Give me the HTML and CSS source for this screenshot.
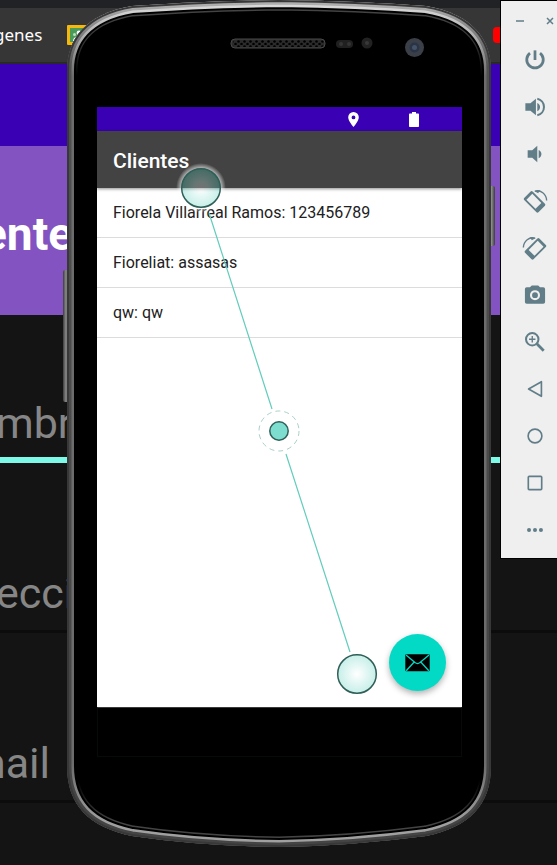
FILE: index.html
```html
<!DOCTYPE html>
<html lang="es">
<head>
<meta charset="utf-8">
<meta name="viewport" content="width=device-width, initial-scale=1">
<title>Clientes</title>
<link rel="stylesheet" href="styles.css">
</head>
<body>
<div class="desktop">
  <div class="tabstrip"></div>
  <nav class="bookmarks">
    <a class="bookmark" href="#">genes</a>
    <svg class="classroom" viewBox="0 0 24 20" aria-hidden="true">
      <rect width="24" height="20" rx="1" fill="#f4b90f"/><rect x="3" y="3" width="18" height="14" fill="#4b9b58"/>
      <circle cx="12" cy="8" r="2.4" fill="#fff"/><path d="M6 16c0-3 3-5 6-5s6 2 6 5z" fill="#fff"/><circle cx="7.5" cy="9.5" r="1.5" fill="#b9dfbd"/>
    </svg>
    <span class="video-mark"></span>
  </nav>
  <div class="page-status"></div>
  <header class="page-title"><span>ente</span><span class="page-action">K</span></header>
  <form class="page-form">
    <div class="field active"><label for="f1">mbr</label><input id="f1" type="text"></div>
    <div class="field"><label for="f2">ecci</label><input id="f2" type="text"></div>
    <div class="field cut"><label for="f3">mail</label><input id="f3" type="text"></div>
  </form>
</div>

<main class="phone">
  <svg class="frame" viewBox="0 0 432 848" aria-hidden="true">
    <defs>
      <linearGradient id="metal" x1="0" y1="0" x2="0" y2="848" gradientUnits="userSpaceOnUse">
        <stop offset="0" stop-color="#b4b4b4"/><stop offset=".03" stop-color="#8c8c8c"/><stop offset=".08" stop-color="#505050"/><stop offset="1" stop-color="#444"/>
      </linearGradient>
      <linearGradient id="shine" x1="0" y1="0" x2="0" y2="848" gradientUnits="userSpaceOnUse">
        <stop offset="0" stop-color="#e0e0e0"/><stop offset=".04" stop-color="#b4b4b4"/><stop offset=".09" stop-color="#6c6c6c"/><stop offset=".9" stop-color="#6c6c6c"/><stop offset=".97" stop-color="#a0a0a0"/>
      </linearGradient>
      <linearGradient id="bezel" x1="0" y1="0" x2="0" y2="848" gradientUnits="userSpaceOnUse">
        <stop offset="0" stop-color="#4a4a4a"/><stop offset=".05" stop-color="#333"/><stop offset=".09" stop-color="#000"/><stop offset=".92" stop-color="#000"/><stop offset=".97" stop-color="#444"/>
      </linearGradient>
      <linearGradient id="key" x1="0" y1="0" x2="1" y2="0">
        <stop offset="0" stop-color="#3c3c3c"/><stop offset=".5" stop-color="#8a8a8a"/><stop offset="1" stop-color="#3c3c3c"/>
      </linearGradient>
      <path id="body" d="M4 70C4 40 22 14 69 6Q137 1 216 0Q295 1 363 6C410 14 428 40 428 70V766C428 805 406 827 363 836Q286 846 216 847Q137 846 69 836C26 827 4 805 4 766Z"/>
      <clipPath id="edge"><use href="#body"/></clipPath>
      <pattern id="mesh" width="6" height="5" patternUnits="userSpaceOnUse" x="168" y="40"><circle cx="1.500" cy="1.500" r="1.300" fill="#000"/><circle cx="4.500" cy="4" r="1.300" fill="#000"/></pattern>
    </defs>
    <rect x="0" y="270" width="6" height="132" rx="2" fill="url(#key)"/>
    <rect x="425" y="186" width="7" height="60" rx="2" fill="url(#key)"/>
    <g clip-path="url(#edge)" fill="none">
      <use href="#body" fill="#000"/>
      <use href="#body" stroke="url(#bezel)" stroke-width="21"/>
      <use href="#body" stroke="#000" stroke-width="18"/>
      <use href="#body" stroke="url(#shine)" stroke-width="14"/>
      <use href="#body" stroke="url(#metal)" stroke-width="9"/>
      <use href="#body" stroke="#383838" stroke-width="4"/>
    </g>
    <rect x="168" y="39" width="94" height="9" rx="4" fill="#2b2b2b" stroke="#484848"/>
    <rect x="170" y="40" width="91" height="7" rx="3" fill="url(#mesh)"/>
    <rect x="273" y="40" width="17" height="8" rx="4" fill="#202020"/>
    <circle cx="278" cy="44" r="2" fill="#343434"/><circle cx="286" cy="44" r="2" fill="#343434"/>
    <circle cx="304" cy="43" r="5.500" fill="#222"/><circle cx="304" cy="43" r="2" fill="#383838"/>
    <circle cx="351.500" cy="47.500" r="9.500" fill="#3b4048"/><circle cx="351.500" cy="47.500" r="5" fill="#2b3444"/><circle cx="351.500" cy="47.500" r="2.500" fill="#43536b"/>
  </svg>
  <section class="screen">
    <div class="statusbar">
      <svg class="pin" viewBox="0 0 11 15" aria-label="Ubicación"><path fill="#fff" fill-rule="evenodd" d="M5.500 0A5.300 5.300 0 0 0 .2 5.300C.2 9.200 5.500 15 5.500 15s5.300-5.800 5.300-9.700A5.300 5.300 0 0 0 5.500 0zm0 3.500a1.900 1.900 0 1 1 0 3.800 1.900 1.900 0 0 1 0-3.800z"/></svg>
      <svg class="battery" viewBox="0 0 10 15" aria-label="Batería"><path fill="#fff" d="M3 0h4v1.500h2.200q.8 0 .8.800v11.900q0 .8-.8.800H.8q-.8 0-.8-.8V2.300q0-.8.8-.8H3z"/></svg>
    </div>
    <header class="appbar"><h1>Clientes</h1></header>
    <ul class="clients">
      <li>Fiorela Villarreal Ramos: 123456789</li>
      <li>Fioreliat: assasas</li>
      <li>qw: qw</li>
    </ul>
    <button class="fab" type="button" aria-label="Enviar correo">
      <svg viewBox="0 0 25 18"><rect x=".3" y=".3" width="24.400" height="17" rx="1" fill="#000"/><path d="M1 1l9 7.600q2.500 2 5 0L24 1M1.200 16.700L9 8.300M23.800 16.700L16 8.300" fill="none" stroke="#03dac5" stroke-width="1.300"/></svg>
    </button>
  </section>
  <div class="navbar"></div>
  <svg class="gesture" viewBox="0 0 432 848" aria-hidden="true">
    <defs>
      <radialGradient id="touch"><stop offset="0" stop-color="#fff" stop-opacity=".25"/><stop offset=".35" stop-color="#b9ece4" stop-opacity=".3"/><stop offset="1" stop-color="#45c9b5" stop-opacity=".3"/></radialGradient>
      <radialGradient id="halo"><stop offset=".76" stop-color="#fff" stop-opacity=".7"/><stop offset="1" stop-color="#fff" stop-opacity="0"/></radialGradient>
      <mask id="ring"><rect width="432" height="848" fill="#fff"/><circle cx="138" cy="188" r="19.500" fill="#000"/></mask>
    </defs>
    <circle cx="138" cy="188" r="25" fill="url(#halo)" mask="url(#ring)"/>
    <path d="M146 213L209 409M223 454L287 652" stroke="#63cdbb" stroke-width="1.200"/>
    <g stroke="#2f5f58" stroke-width="1.500">
      <circle cx="138" cy="188" r="19.300" fill="url(#touch)"/>
      <circle cx="294" cy="674" r="19.300" fill="url(#touch)"/>
      <circle cx="216" cy="431" r="9.200" fill="#7dddcf"/>
    </g>
    <circle cx="216" cy="431" r="20" fill="none" stroke="#a9d0c9" stroke-dasharray="5 4"/>
  </svg>
</main>

<aside class="toolbar">
  <div class="window-actions">
    <button type="button" aria-label="Minimizar"><svg viewBox="0 0 8 8"><path d="M0 4h8"/></svg></button>
    <button type="button" aria-label="Cerrar"><svg viewBox="0 0 8 8"><path d="M1 1l6 6M7 1L1 7"/></svg></button>
  </div>
  <button type="button" aria-label="Encender"><svg viewBox="0 0 24 24"><g class="line bold"><path d="M12 1.500v10.500"/><path d="M6.500 4.500a9 9 0 1 0 11 0"/></g></svg></button>
  <button type="button" aria-label="Subir volumen"><svg viewBox="0 0 24 24"><path d="M1.500 8v8H7l6 5V3L7 8zM14.500 7.500v9c2-.8 3-2.500 3-4.500s-1-3.700-3-4.500z"/><path class="line" d="M14.500 3a9.200 9.200 0 0 1 0 18"/></svg></button>
  <button type="button" aria-label="Bajar volumen"><svg viewBox="0 0 24 24"><path d="M4 8v8h5l5.500 5V3L9 8zM16 7.500v9c2-.8 3-2.500 3-4.500s-1-3.700-3-4.500z"/></svg></button>
  <button type="button" aria-label="Girar a la izquierda"><svg viewBox="0 0 24 24"><g id="rotate"><g transform="rotate(45 11.500 13)"><path fill-rule="evenodd" d="M2 6.500h19q1.500 0 1.500 1.500v10q0 1.500-1.500 1.500H2Q.5 19.500.5 18V8Q.5 6.500 2 6.500zM3.500 8.500v9h14v-9z"/></g><path class="line thin" d="M12 1.200c6-1.700 12.500 3 12.700 10.300"/><path d="M11 1.200L17.500 0l-2 3.500z"/></g></svg></button>
  <button type="button" aria-label="Girar a la derecha"><svg viewBox="0 0 24 24"><use href="#rotate" transform="matrix(-1 0 0 1 24 0)"/></svg></button>
  <button type="button" aria-label="Capturar pantalla"><svg viewBox="0 0 24 24"><path fill-rule="evenodd" d="M8.500 1.500L6.500 3.500H3q-2 0-2 2v14q0 2 2 2h18q2 0 2-2v-14q0-2-2-2h-3.500l-2-2zM12 6.700a5.500 5.500 0 1 1 0 11 5.500 5.500 0 0 1 0-11zm0 2.300a3.200 3.200 0 1 0 0 6.400 3.200 3.200 0 0 0 0-6.400z"/></svg></button>
  <button type="button" aria-label="Ampliar"><svg viewBox="0 0 24 24"><g class="line"><circle cx="9" cy="9" r="6.800"/><path class="bold" d="M14 14l7.500 7.500"/><path class="thin" d="M5.500 9h7M9 5.500v7"/></g></svg></button>
  <button type="button" aria-label="Atrás"><svg viewBox="0 0 24 24"><path class="line mid" d="M19 4v16L5 12z" stroke-linejoin="round"/></svg></button>
  <button type="button" aria-label="Inicio"><svg viewBox="0 0 24 24"><circle class="line mid" cx="12" cy="12" r="7.500"/></svg></button>
  <button type="button" aria-label="Recientes"><svg viewBox="0 0 24 24"><rect class="line mid" x="4.700" y="4.700" width="14.600" height="14.600" rx="1"/></svg></button>
  <button type="button" aria-label="Más"><svg viewBox="0 0 24 24"><circle cx="5.500" cy="12" r="2.200"/><circle cx="12" cy="12" r="2.200"/><circle cx="18.500" cy="12" r="2.200"/></svg></button>
</aside>
</body>
</html>
```
FILE: styles.css
```css
* { box-sizing: border-box; }
body {
  margin: 0;
  position: relative;
  min-height: 100vh;
  overflow: hidden;
  background: #141414;
  font-family: Roboto, "Liberation Sans", sans-serif;
}
button { border: 0; padding: 0; background: none; cursor: pointer; }

/* Browser behind the emulator */
.desktop { overflow: hidden; }
.tabstrip { height: 8px; background: #202226; }
.bookmarks {
  display: flex;
  align-items: center;
  height: 56px;
  background: #363636;
  border-bottom: 2px solid #292929;
}
.bookmark {
  width: 67px;
  margin-left: -6px;
  color: #fff;
  font: 17px/24px "Noto Sans", sans-serif;
  text-decoration: none;
}
.classroom { width: 24px; height: 20px; margin-left: 6px; }
.video-mark {
  width: 24px;
  height: 16px;
  margin-left: 402px;
  border-radius: 4px;
  background: #f00;
  flex: none;
}
.page-status { height: 82px; background: #3a00b3; }
.page-title {
  display: flex;
  align-items: center;
  justify-content: space-between;
  height: 169px;
  padding: 6px 36px 0 0;
  background: #8353c1;
  color: #fff;
  font-size: 46px;
  font-weight: 700;
  line-height: 56px;
  text-indent: -18px;
}
.page-action { font-size: 34px; text-indent: 0; }
.field {
  display: flex;
  flex-direction: column;
  justify-content: flex-end;
  height: 170px;
  overflow: hidden;
}
.field label { color: #868686; font-size: 43px; line-height: 48px; text-indent: -4px; }
.field.cut label { text-indent: -32px; }
.field input {
  width: 100%;
  height: 16px;
  padding: 0;
  border: 0;
  border-bottom: 3px solid #0c0c0c;
  background: none;
}
.field.active { height: 148px; }
.field.active input { border-bottom: 6px solid #7dfae7; }

/* Device */
.phone {
  position: absolute;
  top: 0;
  left: 63px;
  width: 432px;
  height: 848px;
  padding: 107px 33px 0 34px;
}
.frame, .gesture { position: absolute; top: 0; left: 0; width: 432px; height: 848px; }
.gesture { pointer-events: none; }
.screen { position: relative; height: 600px; background: #fff; }
.statusbar {
  display: flex;
  align-items: center;
  justify-content: flex-end;
  gap: 50px;
  height: 24px;
  padding-right: 43px;
  background: #3a00b3;
}
.pin { width: 11px; height: 15px; }
.battery { width: 10px; height: 15px; }
.appbar {
  display: flex;
  align-items: center;
  height: 57px;
  padding: 2px 16px 0;
  background: #434343;
  box-shadow: 0 1px 3px rgba(0, 0, 0, .45);
  color: #fff;
}
.appbar h1 { margin: 0; font-size: 21px; font-weight: 500; line-height: 24px; }
.clients { margin: 0; padding: 0; list-style: none; }
.clients li {
  height: 50px;
  padding: 0 16px;
  border-bottom: 1px solid #dcdcdc;
  color: #212121;
  font-size: 16px;
  line-height: 50px;
}
.fab {
  position: absolute;
  right: 16px;
  bottom: 16px;
  display: grid;
  place-items: center;
  width: 57px;
  height: 57px;
  border-radius: 50%;
  background: #03dac5;
  box-shadow: 0 3px 6px rgba(0, 0, 0, .3);
}
.fab svg { width: 25px; height: 18px; }
.navbar { position: relative; height: 50px; border: 1px solid #060a09; border-top-color: #3a3a3a; }

/* Emulator controls */
.toolbar {
  position: absolute;
  top: 0;
  right: 0;
  display: flex;
  flex-direction: column;
  align-items: center;
  width: 57px;
  height: 559px;
  padding-left: 11px;
  border: solid #000;
  border-width: 1px 0 1px 1px;
  background: #efefef;
}
.toolbar > button { display: grid; place-items: center; width: 32px; height: 47px; }
.toolbar > button svg { width: 22px; height: 22px; fill: #607d88; overflow: visible; }
.window-actions { display: flex; justify-content: space-between; width: 38px; height: 35px; padding-top: 16px; }
.window-actions button { display: flex; width: 8px; height: 8px; }
.window-actions svg { width: 8px; height: 8px; stroke: #607d88; stroke-width: 1.5; }
.toolbar .line { fill: none; stroke: #607d88; stroke-width: 2.2; }
.toolbar .bold { stroke-width: 3; }
.toolbar .mid { stroke-width: 1.8; }
.toolbar .thin { stroke-width: 1.5; }
```
